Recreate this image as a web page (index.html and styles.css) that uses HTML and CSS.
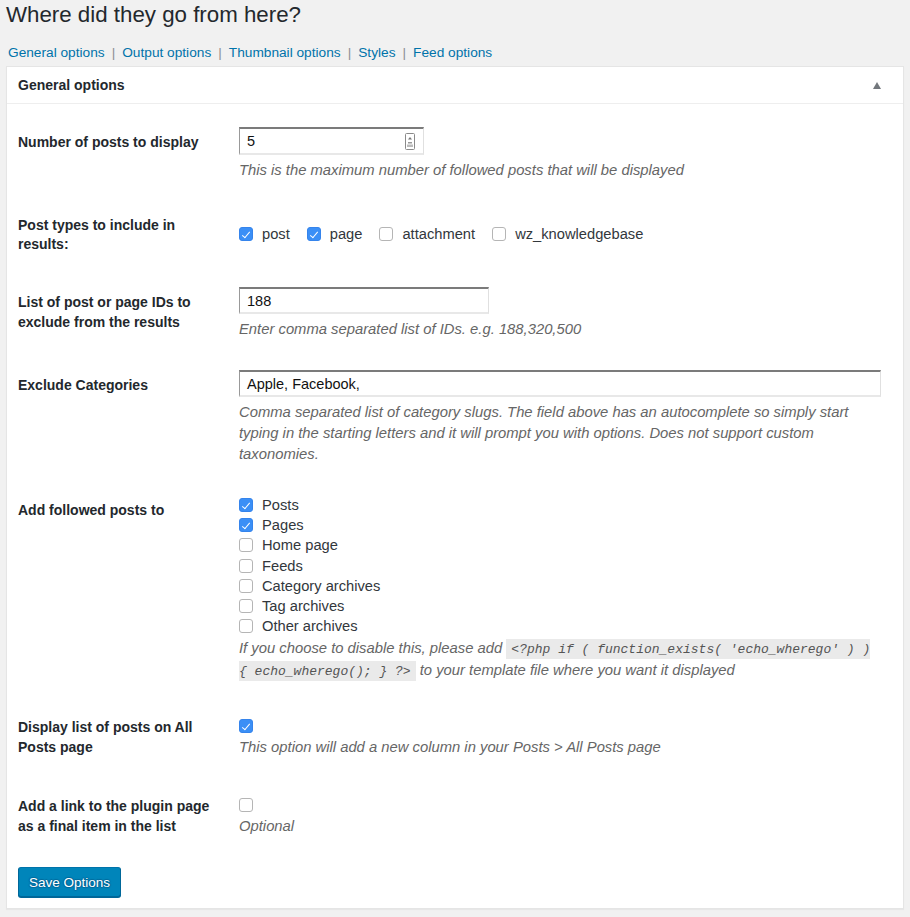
FILE: index.html
```html
<!DOCTYPE html>
<html>
<head>
<meta charset="utf-8">
<link rel="stylesheet" href="styles.css">
</head>
<body>
<div class="wrap">
  <h1>Where did they go from here?</h1>
  <ul class="subnav">
    <li><a href="#">General options</a><span class="sep">|</span></li>
    <li><a href="#">Output options</a><span class="sep">|</span></li>
    <li><a href="#">Thumbnail options</a><span class="sep">|</span></li>
    <li><a href="#">Styles</a><span class="sep">|</span></li>
    <li><a href="#">Feed options</a></li>
  </ul>
  <div class="postbox">
    <div class="hndle">
      <span>General options</span>
      <span class="toggle"></span>
    </div>
    <div class="inside">
      <table class="form-table">
        <tr class="row-first">
          <th>Number of posts to display</th>
          <td>
            <div class="input num"><span class="val">5</span>
              <svg class="spin" width="10" height="17" viewBox="0 0 10 17"><rect x="0.5" y="0.5" width="9" height="16" rx="1" fill="#fff" stroke="#8a8a8a"/><path d="M3 6.5 L5 4 L7 6.5 Z" fill="#777"/><rect x="3" y="9" width="4" height="1.5" fill="#999"/><rect x="2" y="11.5" width="6" height="2.5" fill="#bbb"/></svg>
            </div>
            <p class="description">This is the maximum number of followed posts that will be displayed</p>
          </td>
        </tr>
        <tr class="row-types">
          <th>Post types to include in results:</th>
          <td>
            <div class="inline-checks">
              <label><span class="cb on"></span>post</label>
              <label><span class="cb on"></span>page</label>
              <label><span class="cb"></span>attachment</label>
              <label><span class="cb"></span>wz_knowledgebase</label>
            </div>
          </td>
        </tr>
        <tr>
          <th>List of post or page IDs to exclude from the results</th>
          <td>
            <div class="input ids"><span class="val">188</span></div>
            <p class="description">Enter comma separated list of IDs. e.g. 188,320,500</p>
          </td>
        </tr>
        <tr>
          <th>Exclude Categories</th>
          <td>
            <div class="input wide"><span class="val">Apple, Facebook,</span></div>
            <p class="description">Comma separated list of category slugs. The field above has an autocomplete so simply start typing in the starting letters and it will prompt you with options. Does not support custom taxonomies.</p>
          </td>
        </tr>
        <tr>
          <th>Add followed posts to</th>
          <td>
            <div class="stack-checks">
              <label><span class="cb on"></span>Posts</label>
              <label><span class="cb on"></span>Pages</label>
              <label><span class="cb"></span>Home page</label>
              <label><span class="cb"></span>Feeds</label>
              <label><span class="cb"></span>Category archives</label>
              <label><span class="cb"></span>Tag archives</label>
              <label><span class="cb"></span>Other archives</label>
            </div>
            <p class="description tight">If you choose to disable this, please add <code>&lt;?php if ( function_exists( 'echo_wherego' ) ) { echo_wherego(); } ?&gt;</code> to your template file where you want it displayed</p>
          </td>
        </tr>
        <tr>
          <th>Display list of posts on All Posts page</th>
          <td>
            <div class="single-check"><span class="cb on"></span></div>
            <p class="description flush">This option will add a new column in your Posts &gt; All Posts page</p>
          </td>
        </tr>
        <tr>
          <th>Add a link to the plugin page as a final item in the list</th>
          <td>
            <div class="single-check"><span class="cb"></span></div>
            <p class="description flush">Optional</p>
          </td>
        </tr>
      </table>
      <div class="submit"><button class="button-primary">Save Options</button></div>
    </div>
  </div>
</div>
</body>
</html>
```

FILE: styles.css
```css
html, body {
  margin: 0;
  padding: 0;
  background: #f1f1f1;
}
body {
  font-family: "Liberation Sans", Arial, sans-serif;
  color: #444;
  font-size: 13px;
}
.wrap {
  padding: 0 6px 8px 6px;
}
h1 {
  margin: 0;
  padding: 0;
  font-size: 22.3px;
  font-weight: 400;
  line-height: 30px;
  color: #23282d;
}
.subnav {
  list-style: none;
  margin: 0;
  padding: 13px 0 0 2px;
  display: flex;
  font-size: 13.7px;
  line-height: 20px;
  height: 23px;
}
.subnav a {
  color: #0073aa;
  text-decoration: none;
}
.subnav .sep {
  color: #8c8f94;
  padding: 0 7px;
}
.postbox {
  background: #fff;
  border: 1px solid #e5e5e5;
  box-shadow: 0 1px 1px rgba(0,0,0,.04);
}
.hndle {
  height: 36px;
  border-bottom: 1px solid #eee;
  display: flex;
  align-items: center;
  justify-content: space-between;
  padding: 0 22px 0 11px;
  font-size: 14px;
  font-weight: 700;
  color: #23282d;
}
.toggle {
  width: 0;
  height: 0;
  border-left: 4.5px solid transparent;
  border-right: 4.5px solid transparent;
  border-bottom: 7px solid #72777c;
}
.inside {
  padding: 8px 11px 11px 11px;
}
.form-table {
  border-collapse: collapse;
  width: 100%;
}
.form-table th {
  width: 200px;
  padding: 21px 10px 19px 0;
  text-align: left;
  vertical-align: top;
  font-size: 14px;
  font-weight: 700;
  line-height: 19.5px;
  color: #23282d;
}
.form-table td {
  padding: 15px 10px 15px 11px;
  vertical-align: top;
  font-size: 14.7px;
  line-height: 20px;
  color: #32373c;
}
.form-table .row-first td { padding-bottom: 13px; }
.form-table .row-types th { line-height: 19px; padding-top: 22px; padding-bottom: 18px; }
.input {
  box-sizing: border-box;
  height: 28px;
  border-top: 2px solid #7b7b7b;
  border-left: 1px solid #999;
  border-right: 1px solid #e0e0e0;
  border-bottom: 2px solid #e8e8e8;
  display: flex;
  align-items: center;
  justify-content: space-between;
  padding: 0 8px 0 7px;
  background: #fff;
  color: #111;
  font-size: 14.5px;
}
.input.num { width: 185px; }
.input.ids { width: 250px; height: 27px; }
.input.wide { width: 642px; height: 27px; }
.spin { display: block; }
.description {
  margin: 5px 0 0 0;
  font-style: italic;
  font-size: 14.8px;
  color: #666;
  line-height: 21px;
}
.description.tight { margin-top: 2px; }
.description.flush { margin-top: 1px; }
.cb {
  box-sizing: border-box;
  display: inline-block;
  width: 14px;
  height: 14px;
  border: 1px solid #b5b5b5;
  border-radius: 3px;
  background: #fff;
  position: relative;
  vertical-align: -2px;
  margin-right: 9px;
}
.cb.on {
  background: #3b8ff6;
  border-color: #3584ec;
}
.cb.on::after {
  content: "";
  position: absolute;
  left: 4px;
  top: 1.5px;
  width: 3px;
  height: 7px;
  border-right: 1.6px solid #fff;
  border-bottom: 1.6px solid #fff;
  transform: rotate(40deg);
}
.inline-checks {
  display: flex;
  gap: 17px;
  padding-top: 15px;
}
.inline-checks label { display: flex; align-items: center; }
.stack-checks {
  display: flex;
  flex-direction: column;
}
.stack-checks label {
  line-height: 20.2px;
}
.single-check {
  height: 20px;
  padding-top: 4px;
  display: flex;
  align-items: center;
}
code {
  font-family: "Liberation Mono", monospace;
  font-size: 13px;
  font-style: italic;
  background: #eaeaea;
  padding: 3px 5px 2px 5px;
  color: #555;
}
.submit {
  display: flex;
  padding: 12px 0 0 0;
}
.button-primary {
  height: 30px;
  padding: 0 10px;
  background: #0085ba;
  border: 1px solid #0073aa;
  border-color: #0073aa #006799 #006799;
  box-shadow: 0 1px 0 #006799;
  border-radius: 3px;
  color: #fff;
  font-family: "Liberation Sans", Arial, sans-serif;
  font-size: 13.5px;
  text-shadow: 0 -1px 1px #006799, 1px 0 1px #006799, 0 1px 1px #006799, -1px 0 1px #006799;
}
```
